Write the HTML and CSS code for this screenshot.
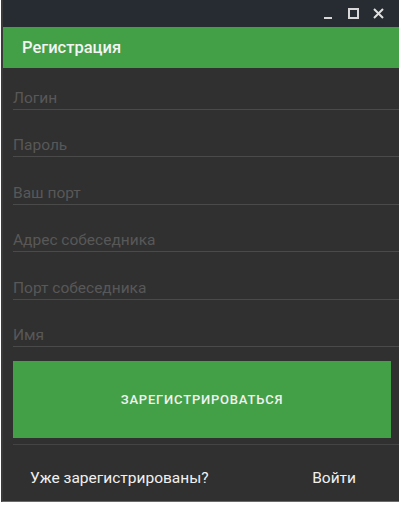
FILE: index.html
```html
<!DOCTYPE html>
<html lang="ru">
<head>
<meta charset="utf-8">
<link rel="stylesheet" href="styles.css">
</head>
<body>
<div class="window">
  <div class="titlebar">
    <span class="wbtn">
      <svg width="10" height="10" viewBox="0 0 10 10"><rect x="1" y="8" width="8" height="2" fill="#d8d8d8"/></svg>
    </span>
    <span class="wbtn">
      <svg width="11" height="11" viewBox="0 0 11 11"><rect x="1" y="1" width="9" height="9" fill="none" stroke="#d8d8d8" stroke-width="2"/></svg>
    </span>
    <span class="wbtn">
      <svg width="11" height="11" viewBox="0 0 11 11"><path d="M1 1L10 10M10 1L1 10" stroke="#e0e0e0" stroke-width="2"/></svg>
    </span>
  </div>
  <div class="appbar">Регистрация</div>
  <div class="content">
    <div class="field"><span class="ph">Логин</span></div>
    <div class="field"><span class="ph">Пароль</span></div>
    <div class="field"><span class="ph">Ваш порт</span></div>
    <div class="field"><span class="ph">Адрес собеседника</span></div>
    <div class="field"><span class="ph">Порт собеседника</span></div>
    <div class="field"><span class="ph">Имя</span></div>
    <div class="button">ЗАРЕГИСТРИРОВАТЬСЯ</div>
    <div class="divider"></div>
    <div class="footer">
      <span class="q">Уже зарегистрированы?</span>
      <span class="login">Войти</span>
    </div>
  </div>
</div>
</body>
</html>
```

FILE: styles.css
```css
html, body {
  margin: 0;
  padding: 0;
  background: #ffffff;
}
body {
  font-family: Roboto, "Liberation Sans", sans-serif;
  width: 401px;
  height: 505px;
  overflow: hidden;
}
.window {
  margin: 0 2px 0 1px;
  height: 501px;
  background: #303030;
  border-left: 2px solid #3a3a3a;
  border-bottom: 1px solid #6a6a6a;
  display: flex;
  flex-direction: column;
  overflow: hidden;
}
.titlebar {
  flex-shrink: 0;
  height: 27px;
  background: #262c31;
  display: flex;
  justify-content: flex-end;
  align-items: center;
  padding-right: 15px;
  gap: 13px;
}
.wbtn {
  width: 12px;
  height: 12px;
  display: flex;
  align-items: center;
  justify-content: center;
}
.appbar {
  flex-shrink: 0;
  height: 41px;
  background: #43a047;
  color: #f4f4f4;
  font-size: 16.5px;
  font-weight: 500;
  display: flex;
  align-items: center;
  padding-left: 19px;
}
.content {
  flex-shrink: 0;
  padding: 0 0 0 10px;
  display: flex;
  flex-direction: column;
}
.field {
  flex-shrink: 0;
  height: 46.4px;
  border-bottom: 1px solid #4a4a4a;
  display: flex;
  align-items: flex-end;
}
.field:first-child {
  height: 41px;
}
.ph {
  color: #585858;
  font-size: 15.5px;
  line-height: 20px;
  padding-bottom: 1px;
}
.button {
  flex-shrink: 0;
  margin-top: 14px;
  margin-right: 8px;
  height: 77px;
  background: #43a047;
  color: #f2f2f2;
  font-size: 13px;
  font-weight: 500;
  letter-spacing: 0.8px;
  display: flex;
  align-items: center;
  justify-content: center;
}
.divider {
  flex-shrink: 0;
  margin-top: 6px;
  height: 1px;
  background: #444444;
}
.footer {
  flex-shrink: 0;
  display: flex;
  justify-content: space-between;
  align-items: center;
  height: 66px;
  padding: 0 43px 0 17px;
  color: #f0f0f0;
  font-size: 15.5px;
}
```
